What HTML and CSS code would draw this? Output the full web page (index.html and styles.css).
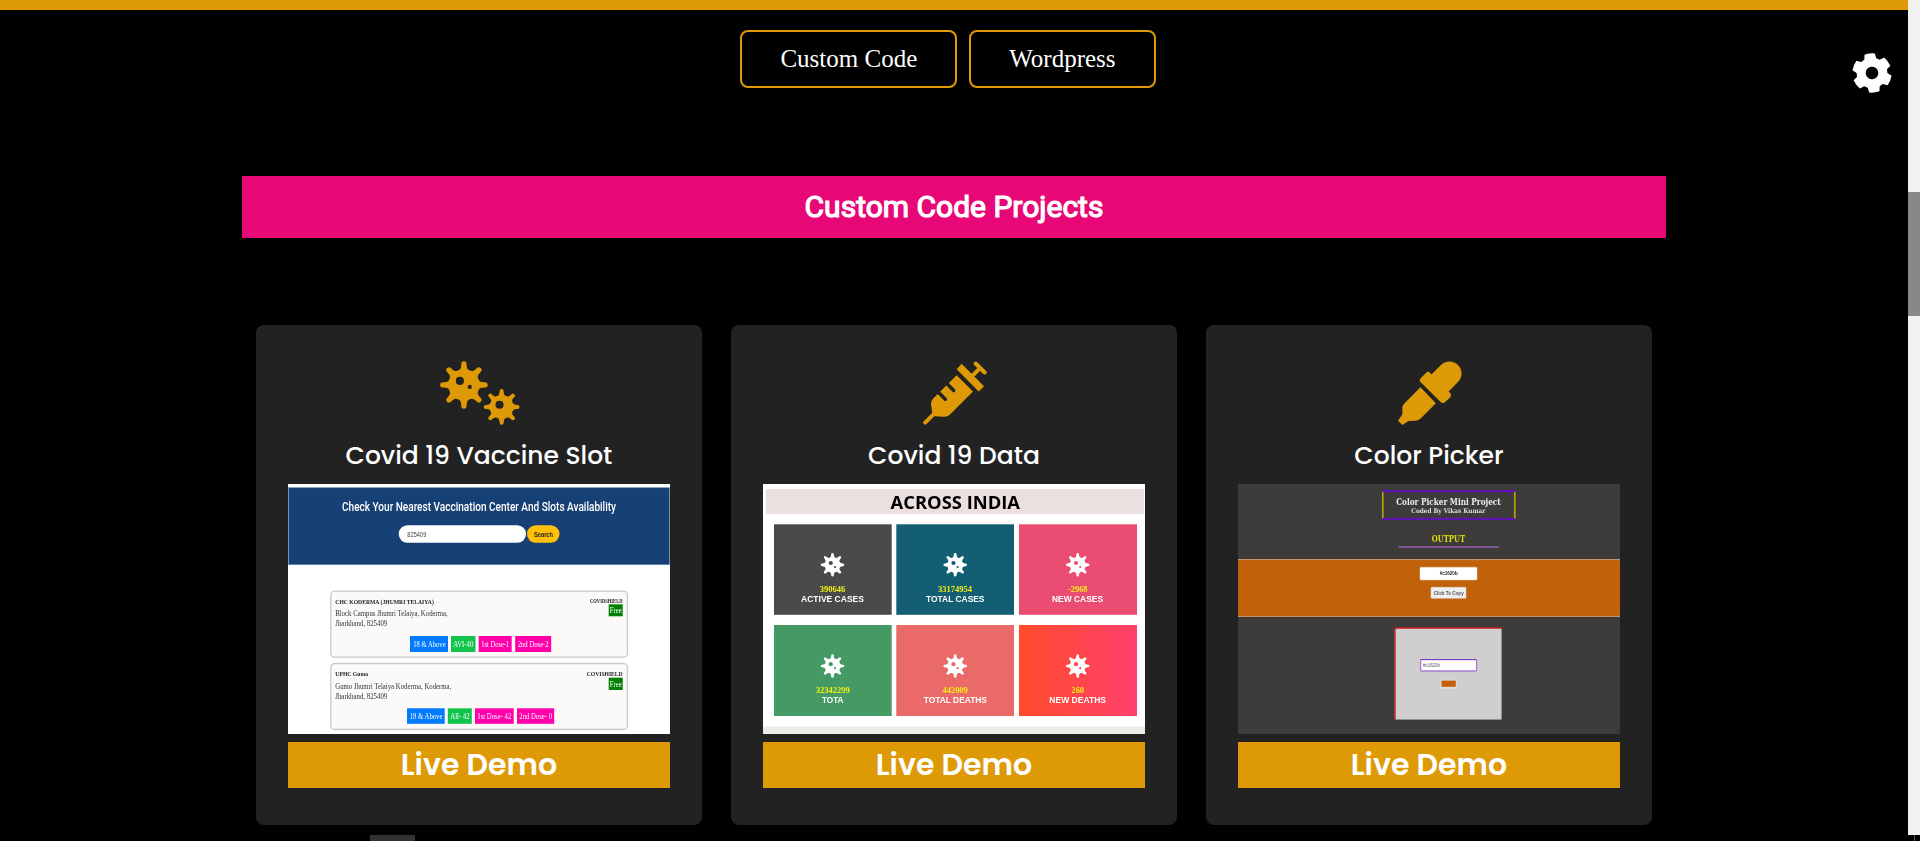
FILE: index.html
```html
<!DOCTYPE html>
<html lang="en">
<head>
<meta charset="utf-8">
<title>Custom Code Projects</title>
<link rel="stylesheet" href="styles.css">
</head>
<body>
<svg class="defs" aria-hidden="true">
  <defs>
    <g id="virus">
      <path d="M19.08 2.65A5.25 5.25 0 0 0 15.37 11.62L11.62 15.37A5.25 5.25 0 0 0 2.65 19.08L-2.65 19.08A5.25 5.25 0 0 0 -11.62 15.37L-15.37 11.62A5.25 5.25 0 0 0 -19.08 2.65L-19.08 -2.65A5.25 5.25 0 0 0 -15.37 -11.62L-11.62 -15.37A5.25 5.25 0 0 0 -2.65 -19.08L2.65 -19.08A5.25 5.25 0 0 0 11.62 -15.37L15.37 -11.62A5.25 5.25 0 0 0 19.08 -2.65Z"/>
      <path d="M0-20.9V20.9M-20.9 0H20.9M-14.8-14.8L14.8 14.8M14.8-14.8L-14.8 14.8" stroke="currentColor" stroke-width="5.3" stroke-linecap="round"/>
    </g>
    <linearGradient id="sunset"><stop offset="0" stop-color="#ff4b2b"/><stop offset="1" stop-color="#ff416c"/></linearGradient>
  </defs>
</svg>
<div class="page">
  <div class="viewport">
    <main class="content">
      <nav class="filters">
        <a class="filter">Custom Code</a>
        <a class="filter">Wordpress</a>
      </nav>
      <h2 class="banner">Custom Code Projects</h2>
      <section class="cards">
        <article class="card">
          <svg class="icon icon-wide" viewBox="-23.7 -23.7 79.3 63.4">
            <use href="#virus"/>
            <use href="#virus" transform="translate(37.4 21.8) scale(.755)"/>
            <g class="hole"><circle cx="-4" cy="-4" r="4"/><circle cx="5.8" cy="2" r="2.1"/><circle cx="35.3" cy="19.7" r="4"/></g>
          </svg>
          <h3 class="title">Covid 19 Vaccine Slot</h3>
          <svg class="shot" viewBox="0 0 382 250">
            <rect width="382" height="250" fill="#fff"/>
            <rect x=".5" y="3.7" width="381" height="77" fill="#174075" stroke="#7790b0" stroke-width=".7"/>
            <text class="cond" x="54" y="27.3" font-size="12" fill="#fff" textLength="274" lengthAdjust="spacingAndGlyphs">Check Your Nearest Vaccination Center And Slots Availability</text>
            <rect x="110.7" y="41.3" width="127.3" height="17.5" rx="8.7" fill="#fff"/>
            <text class="sans" x="119.3" y="52.5" font-size="7" fill="#444" textLength="19" lengthAdjust="spacingAndGlyphs">825409</text>
            <rect x="239" y="41.3" width="32.5" height="17.5" rx="8.7" fill="#ffc107"/>
            <text class="sans strong" x="246" y="52.5" font-size="7" fill="#222" textLength="19" lengthAdjust="spacingAndGlyphs">Search</text>
            <g fill="#fbfaf9" stroke="#c8c8c8" stroke-width="1.3">
              <rect x="42.8" y="107.2" width="296.6" height="66" rx="4"/>
              <rect x="42.8" y="179.5" width="296.6" height="66" rx="4"/>
            </g>
            <g class="serif" fill="#333" font-size="8">
              <text class="strong" x="47.3" y="119.8" font-size="6.7" fill="#222" textLength="98.5" lengthAdjust="spacingAndGlyphs">CHC KODERMA (JHUMRI TELAIYA)</text>
              <text x="47.3" y="132.2" textLength="112.5" lengthAdjust="spacingAndGlyphs">Block Campus Jhumri Telaiya, Koderma,</text>
              <text x="47.3" y="142.3" textLength="52" lengthAdjust="spacingAndGlyphs">Jharkhand, 825409</text>
              <text class="strong" x="302" y="118.5" font-size="6.5" fill="#222" textLength="32.5" lengthAdjust="spacingAndGlyphs">COVIDSHIELD</text>
              <text class="strong" x="47.3" y="192" font-size="6.7" fill="#222" textLength="32.7" lengthAdjust="spacingAndGlyphs">UPHC Gumo</text>
              <text x="47.3" y="204.5" textLength="116" lengthAdjust="spacingAndGlyphs">Gumo Jhumri Telaiya Koderma, Koderma,</text>
              <text x="47.3" y="214.5" textLength="52" lengthAdjust="spacingAndGlyphs">Jharkhand, 825409</text>
              <text class="strong" x="298.7" y="192" font-size="6.7" fill="#222" textLength="36" lengthAdjust="spacingAndGlyphs">COVISHIELD</text>
            </g>
            <g fill="#008000"><rect x="320.7" y="120.3" width="14" height="12"/><rect x="320.7" y="193.7" width="14" height="12.3"/></g>
            <g fill="#007bff"><rect x="122" y="152" width="38" height="16"/><rect x="119" y="224.3" width="37.7" height="15.5"/></g>
            <g fill="#12c44c"><rect x="163" y="152" width="24.5" height="16"/><rect x="159.8" y="224.3" width="24" height="15.5"/></g>
            <g fill="#ff00aa"><rect x="190.7" y="152" width="33" height="16"/><rect x="227.2" y="152" width="36" height="16"/><rect x="187" y="224.3" width="38.7" height="15.5"/><rect x="229" y="224.3" width="37.2" height="15.5"/></g>
            <g class="serif" fill="#fff" font-size="8">
              <text x="321.7" y="129" textLength="12" lengthAdjust="spacingAndGlyphs">Free</text>
              <text x="321.7" y="202.5" textLength="12" lengthAdjust="spacingAndGlyphs">Free</text>
              <text x="125.3" y="162.7" textLength="32.3" lengthAdjust="spacingAndGlyphs">18 &amp; Above</text>
              <text x="165.3" y="162.7" textLength="20" lengthAdjust="spacingAndGlyphs">AVI-40</text>
              <text x="193.3" y="162.7" textLength="28" lengthAdjust="spacingAndGlyphs">1st Dose-1</text>
              <text x="229.7" y="162.7" textLength="31" lengthAdjust="spacingAndGlyphs">2nd Dose-2</text>
              <text x="121.7" y="235" textLength="32.7" lengthAdjust="spacingAndGlyphs">18 &amp; Above</text>
              <text x="162.3" y="235" textLength="19.3" lengthAdjust="spacingAndGlyphs">All- 42</text>
              <text x="189.3" y="235" textLength="34" lengthAdjust="spacingAndGlyphs">1st Dose- 42</text>
              <text x="231.3" y="235" textLength="32.7" lengthAdjust="spacingAndGlyphs">2nd Dose- 0</text>
            </g>
          </svg>
          <a class="demo">Live Demo</a>
        </article>
        <article class="card">
          <svg class="icon" viewBox="667 605 192 191">
            <path d="M768 647L817 696L748 765Q740 773 729 772L702 770L695 763L691 735Q690 725 697 718Z"/>
            <path d="M783 613L850 680L834 696L768 629Z"/>
            <path d="M814 650L838 626" fill="none" stroke="currentColor" stroke-width="12"/>
            <path d="M673.5 789.5L703 760M825 612L852 639" fill="none" stroke="currentColor" stroke-width="12" stroke-linecap="round"/>
            <path class="slot" d="M710 695L734 719M736 670L759 693"/>
          </svg>
          <h3 class="title">Covid 19 Data</h3>
          <svg class="shot" viewBox="0 0 382 250">
            <rect width="382" height="250" fill="#fff"/>
            <rect x="3" y="5" width="378" height="25" fill="#ebdfdf"/>
            <rect y="242.5" width="382" height="7.5" fill="#ebebe6"/>
            <text class="open" x="127.5" y="25" font-size="18.5" fill="#000" textLength="129.5" lengthAdjust="spacingAndGlyphs">ACROSS INDIA</text>
            <rect x="11" y="40.3" width="117.7" height="90.5" fill="#4a4a4a"/>
            <rect x="133.3" y="40.3" width="117.7" height="90.5" fill="#135e73"/>
            <rect x="256" y="40.3" width="118" height="90.5" fill="#eb4d72"/>
            <rect x="11" y="141" width="117.7" height="91" fill="#449964"/>
            <rect x="133.3" y="141" width="117.7" height="91" fill="#e96a68"/>
            <rect x="256" y="141" width="118" height="91" fill="url(#sunset)"/>
            <g class="germs">
              <use href="#virus" transform="translate(69.5 80.8) scale(.5)"/>
              <use href="#virus" transform="translate(192.2 80.8) scale(.5)"/>
              <use href="#virus" transform="translate(314.7 80.8) scale(.5)"/>
              <use href="#virus" transform="translate(69.5 182) scale(.5)"/>
              <use href="#virus" transform="translate(192.2 182) scale(.5)"/>
              <use href="#virus" transform="translate(314.7 182) scale(.5)"/>
            </g>
            <g fill="#4a4a4a"><circle cx="67.8" cy="79" r="2.1"/><circle cx="72" cy="83" r="1.1"/></g>
            <g fill="#135e73"><circle cx="190.5" cy="79" r="2.1"/><circle cx="194.7" cy="83" r="1.1"/></g>
            <g fill="#eb4d72"><circle cx="313" cy="79" r="2.1"/><circle cx="317.2" cy="83" r="1.1"/></g>
            <g fill="#449964"><circle cx="67.8" cy="180.2" r="2.1"/><circle cx="72" cy="184.2" r="1.1"/></g>
            <g fill="#e96a68"><circle cx="190.5" cy="180.2" r="2.1"/><circle cx="194.7" cy="184.2" r="1.1"/></g>
            <g fill="#ff454c"><circle cx="313" cy="180.2" r="2.1"/><circle cx="317.2" cy="184.2" r="1.1"/></g>
            <g class="serif strong" fill="#f4f014" font-size="8">
              <text x="56.8" y="108" textLength="25.5" lengthAdjust="spacingAndGlyphs">390646</text>
              <text x="175" y="108" textLength="34" lengthAdjust="spacingAndGlyphs">33174954</text>
              <text x="305" y="108" textLength="19.5" lengthAdjust="spacingAndGlyphs">-2968</text>
              <text x="52.7" y="209.3" textLength="34" lengthAdjust="spacingAndGlyphs">32342299</text>
              <text x="179.5" y="209.3" textLength="25.3" lengthAdjust="spacingAndGlyphs">442009</text>
              <text x="308.5" y="209.3" textLength="12.5" lengthAdjust="spacingAndGlyphs">260</text>
            </g>
            <g class="sans strong" fill="#fff" font-size="8.5">
              <text x="38" y="118" textLength="63" lengthAdjust="spacingAndGlyphs">ACTIVE CASES</text>
              <text x="163" y="118" textLength="58.5" lengthAdjust="spacingAndGlyphs">TOTAL CASES</text>
              <text x="289" y="118" textLength="51" lengthAdjust="spacingAndGlyphs">NEW CASES</text>
              <text x="59" y="219.3" textLength="21.5" lengthAdjust="spacingAndGlyphs">TOTA</text>
              <text x="160.7" y="219.3" textLength="63.3" lengthAdjust="spacingAndGlyphs">TOTAL DEATHS</text>
              <text x="286.3" y="219.3" textLength="56.7" lengthAdjust="spacingAndGlyphs">NEW DEATHS</text>
            </g>
          </svg>
          <a class="demo">Live Demo</a>
        </article>
        <article class="card">
          <svg class="icon" viewBox="623 154 191 191">
            <path d="M690 217Q686 211 690 206L707 189Q714 183 719 190L723 194L751 166A36 36 0 0 1 802 217L774 245L779 250Q783 256 779 262L763 277Q757 281 751 277Z"/>
            <path d="M690 232L736 280L692 324Q685 332 676 332L655 333L636 345L623 332L636 313V293Q637 286 642 281Z"/>
          </svg>
          <h3 class="title">Color Picker</h3>
          <svg class="shot" viewBox="0 0 382 250">
            <rect width="382" height="250" fill="#3e3c3a"/>
            <path d="M144.8 7V35.3M276.8 7V35.3" stroke="#b3a50f" stroke-width="1.7"/>
            <path d="M144 7.1H277.5M144 35H277.5" stroke="#5f14b8" stroke-width="2.2"/>
            <g class="noto">
              <text x="158.2" y="20.5" font-size="9" fill="#eee" textLength="104.5" lengthAdjust="spacingAndGlyphs">Color Picker Mini Project</text>
              <text x="173.3" y="29.3" font-size="6.5" fill="#ddd" textLength="74" lengthAdjust="spacingAndGlyphs">Coded By Vikas Kumar</text>
              <text x="193.7" y="57.6" font-size="9" fill="#dddd09" textLength="33.5" lengthAdjust="spacingAndGlyphs">OUTPUT</text>
            </g>
            <rect x="160.7" y="62" width="100.3" height="2" fill="#7e5793"/>
            <rect y="75.5" width="382" height="57" fill="#c1620a"/>
            <path d="M0 75.6H382M0 132.4H382" stroke="#c49b7b" stroke-width="1"/>
            <rect x="182" y="83.2" width="57" height="12.8" rx="1" fill="#fff" stroke="#e8d4bf" stroke-width=".5"/>
            <rect x="193" y="103.3" width="35" height="11" rx="1" fill="#efefef" stroke="#ddd" stroke-width=".5"/>
            <g class="sans" font-size="5.3" fill="#222">
              <text class="strong" x="201.7" y="91.4" font-size="5" textLength="18" lengthAdjust="spacingAndGlyphs">#c1620b</text>
              <text class="strong" x="195.7" y="110.8" fill="#555" textLength="30" lengthAdjust="spacingAndGlyphs">Click To Copy</text>
            </g>
            <rect x="156.7" y="144" width="107" height="91.5" rx="2" fill="#cfcfcf"/>
            <path d="M263.5 144.5V235.5H157" fill="none" stroke="#8b918d" stroke-width=".9"/>
            <path d="M157 235V145.5Q157 144 158.5 144H263.5" fill="none" stroke="#d3191c" stroke-width="1.3"/>
            <rect x="182.6" y="175.7" width="56" height="11.3" rx="1" fill="#fff" stroke="#a97bd2" stroke-width="1.3"/>
            <path d="M182.5 175.5H238.5" stroke="#7d3fc0" stroke-width="1"/>
            <text class="sans" x="185" y="182.8" font-size="5" fill="#555" textLength="17" lengthAdjust="spacingAndGlyphs">#c1620b</text>
            <rect x="202.5" y="195.5" width="16.5" height="9.5" fill="#dedbd5"/>
            <rect x="203.5" y="196.6" width="14.3" height="6.2" fill="#c1620a"/>
          </svg>
          <a class="demo">Live Demo</a>
        </article>
      </section>
      <svg class="gear" viewBox="-20 -20 40 40">
        <path fill-rule="evenodd" transform="rotate(-7)" d="M-5.2-19.1Q0-20.2 5.2-19.1L6-14.2L9.3-12.3L14-14Q17.5-10 19.1-5L15.3-1.9V1.9L19.1 5Q17.5 10 14 14L9.3 12.3L6 14.2L5.2 19.1Q0 20.2-5.2 19.1L-6 14.2L-9.3 12.3L-14 14Q-17.5 10-19.1 5L-15.3 1.9V-1.9L-19.1-5Q-17.5-10-14-14L-9.3-12.3L-6-14.2ZM0-6.3A6.3 6.3 0 1 0 0 6.3A6.3 6.3 0 1 0 0-6.3Z"/>
      </svg>
    </main>
    <div class="scrollbar"><div class="thumb"></div></div>
  </div>
  <footer class="edge"><span class="edge-tab"></span><span class="edge-mark"></span></footer>
</div>
</body>
</html>
```
FILE: styles.css
```css
* { box-sizing: border-box; }
body { margin: 0; background: #000; color: #fff; overflow: hidden; }
.defs { position: absolute; width: 0; height: 0; }
.page { height: 841px; display: flex; flex-direction: column; background: #000; }
.viewport { height: 835px; display: flex; }
.content { position: relative; width: 1908px; border-top: 10px solid #dd9906; display: flex; flex-direction: column; align-items: center; }
.filters { display: flex; gap: 12px; margin: 20px 12px 0 0; }
.filter { height: 58px; padding: 0 38px; border: 2px solid #dd9906; border-radius: 8px; font: 25px/54px "Liberation Serif", serif; white-space: nowrap; }
.banner { width: 1424.6px; height: 62px; margin: 88px 0 87px; background: #e70776; text-align: center; font: 400 30px/62px Roboto, sans-serif; -webkit-text-stroke: 1.2px #fff; }
.cards { display: flex; gap: 29px; }
.card { width: 446px; height: 500px; padding: 36px 32px 0; border-radius: 8px; background: #222; display: flex; flex-direction: column; align-items: center; }
.icon { height: 64px; width: 64px; margin-left: 1px; color: #dd9906; fill: currentColor; display: block; }
.icon-wide { width: 80px; }
.hole { fill: #222; }
.slot { fill: none; stroke: #222; stroke-width: 10.5; stroke-linecap: round; }
.title { margin: 12px 0 10px; height: 37px; font: 500 25px/37px Poppins, Inter, sans-serif; white-space: nowrap; }
.shot { width: 382px; height: 250px; display: block; }
.shot text { filter: blur(.3px); }
.demo { width: 382px; height: 46px; margin-top: 8px; background: #dd9906; text-align: center; font: 600 30px/45px Poppins, Inter, sans-serif; }
.germs { fill: #fff; color: #fff; }
.serif { font-family: "Liberation Serif", serif; }
.sans { font-family: "Liberation Sans", sans-serif; }
.cond { font-family: Roboto, sans-serif; font-weight: 500; }
.open { font-family: "Open Sans", "Noto Sans", sans-serif; font-weight: 700; }
.noto { font-family: "DejaVu Serif", serif; font-weight: 700; }
.strong { font-weight: 700; }
.gear { position: absolute; right: 16px; top: 43px; width: 40px; height: 40px; fill: #fff; }
.scrollbar { width: 12px; background: #f1f1f1; padding-top: 192px; }
.thumb { height: 124px; background: #888; }
.edge { height: 6px; padding: 0 5px 0 370px; display: flex; justify-content: space-between; }
.edge-tab { width: 45px; background: #333; }
.edge-mark { width: 1px; background: #555; }
```
